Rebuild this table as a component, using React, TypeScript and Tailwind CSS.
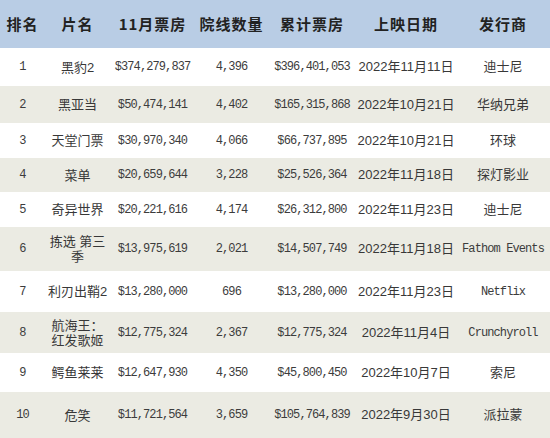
import React from "react";

type Row = {
  rank: string;
  name: string;
  nov: string;
  theaters: string;
  total: string;
  date: string;
  dist: string;
  distMono?: boolean;
  h: string;
};

const rows: Row[] = [
  { rank: "1", name: "黑豹2", nov: "$374,279,837", theaters: "4,396", total: "$396,401,053", date: "2022年11月11日", dist: "迪士尼", h: "h-[38px]" },
  { rank: "2", name: "黑亚当", nov: "$50,474,141", theaters: "4,402", total: "$165,315,868", date: "2022年10月21日", dist: "华纳兄弟", h: "h-[37px]" },
  { rank: "3", name: "天堂门票", nov: "$30,970,340", theaters: "4,066", total: "$66,737,895", date: "2022年10月21日", dist: "环球", h: "h-[35px]" },
  { rank: "4", name: "菜单", nov: "$20,659,644", theaters: "3,228", total: "$25,526,364", date: "2022年11月18日", dist: "探灯影业", h: "h-[34px]" },
  { rank: "5", name: "奇异世界", nov: "$20,221,616", theaters: "4,174", total: "$26,312,800", date: "2022年11月23日", dist: "迪士尼", h: "h-[35px]" },
  { rank: "6", name: "拣选 第三季", nov: "$13,975,619", theaters: "2,021", total: "$14,507,749", date: "2022年11月18日", dist: "Fathom Events", distMono: true, h: "h-[44px]" },
  { rank: "7", name: "利刃出鞘2", nov: "$13,280,000", theaters: "696", total: "$13,280,000", date: "2022年11月23日", dist: "Netflix", distMono: true, h: "h-[41px]" },
  { rank: "8", name: "航海王：红发歌姬", nov: "$12,775,324", theaters: "2,367", total: "$12,775,324", date: "2022年11月4日", dist: "Crunchyroll", distMono: true, h: "h-[41px]" },
  { rank: "9", name: "鳄鱼莱莱", nov: "$12,647,930", theaters: "4,350", total: "$45,800,450", date: "2022年10月7日", dist: "索尼", h: "h-[39px]" },
  { rank: "10", name: "危笑", nov: "$11,721,564", theaters: "3,659", total: "$105,764,839", date: "2022年9月30日", dist: "派拉蒙", h: "h-[46px]" },
];

const cols = "grid grid-cols-[45px_65px_85px_73px_88px_100px_94px]";
const mono = "font-['Liberation_Mono',monospace] text-[12px] tracking-[-0.9px] text-[#3c3c3c]";
const cjk = "font-['Liberation_Sans','Noto_Sans_CJK_SC',sans-serif] text-[13px] text-[#383838]";

export default function App() {
  const headers = ["排名", "片名", "11月票房", "院线数量", "累计票房", "上映日期", "发行商"];
  return (
    <div className="w-[550px] h-[438px] bg-white overflow-hidden">
      <div className={`${cols} h-[48px] bg-[#b9cde5] items-center`}>
        {headers.map((h) => (
          <div
            key={h}
            className="text-center font-['Noto_Sans_CJK_SC',sans-serif] font-bold text-[15px] text-[#222] tracking-[1px]"
          >
            {h}
          </div>
        ))}
      </div>
      {rows.map((r, i) => (
        <div
          key={r.rank}
          className={`${cols} ${r.h} items-center ${i % 2 === 0 ? "bg-white" : "bg-[#ebebe3]"}`}
        >
          <div className={`text-center ${mono}`}>{r.rank}</div>
          <div className={`text-center px-[2px] leading-[15px] ${cjk}`}>{r.name}</div>
          <div className={`text-center ${mono}`}>{r.nov}</div>
          <div className={`text-center ${mono}`}>{r.theaters}</div>
          <div className={`text-center ${mono}`}>{r.total}</div>
          <div className={`text-center ${cjk}`}>{r.date}</div>
          <div className={`text-center ${r.distMono ? mono : cjk}`}>{r.dist}</div>
        </div>
      ))}
    </div>
  );
}
